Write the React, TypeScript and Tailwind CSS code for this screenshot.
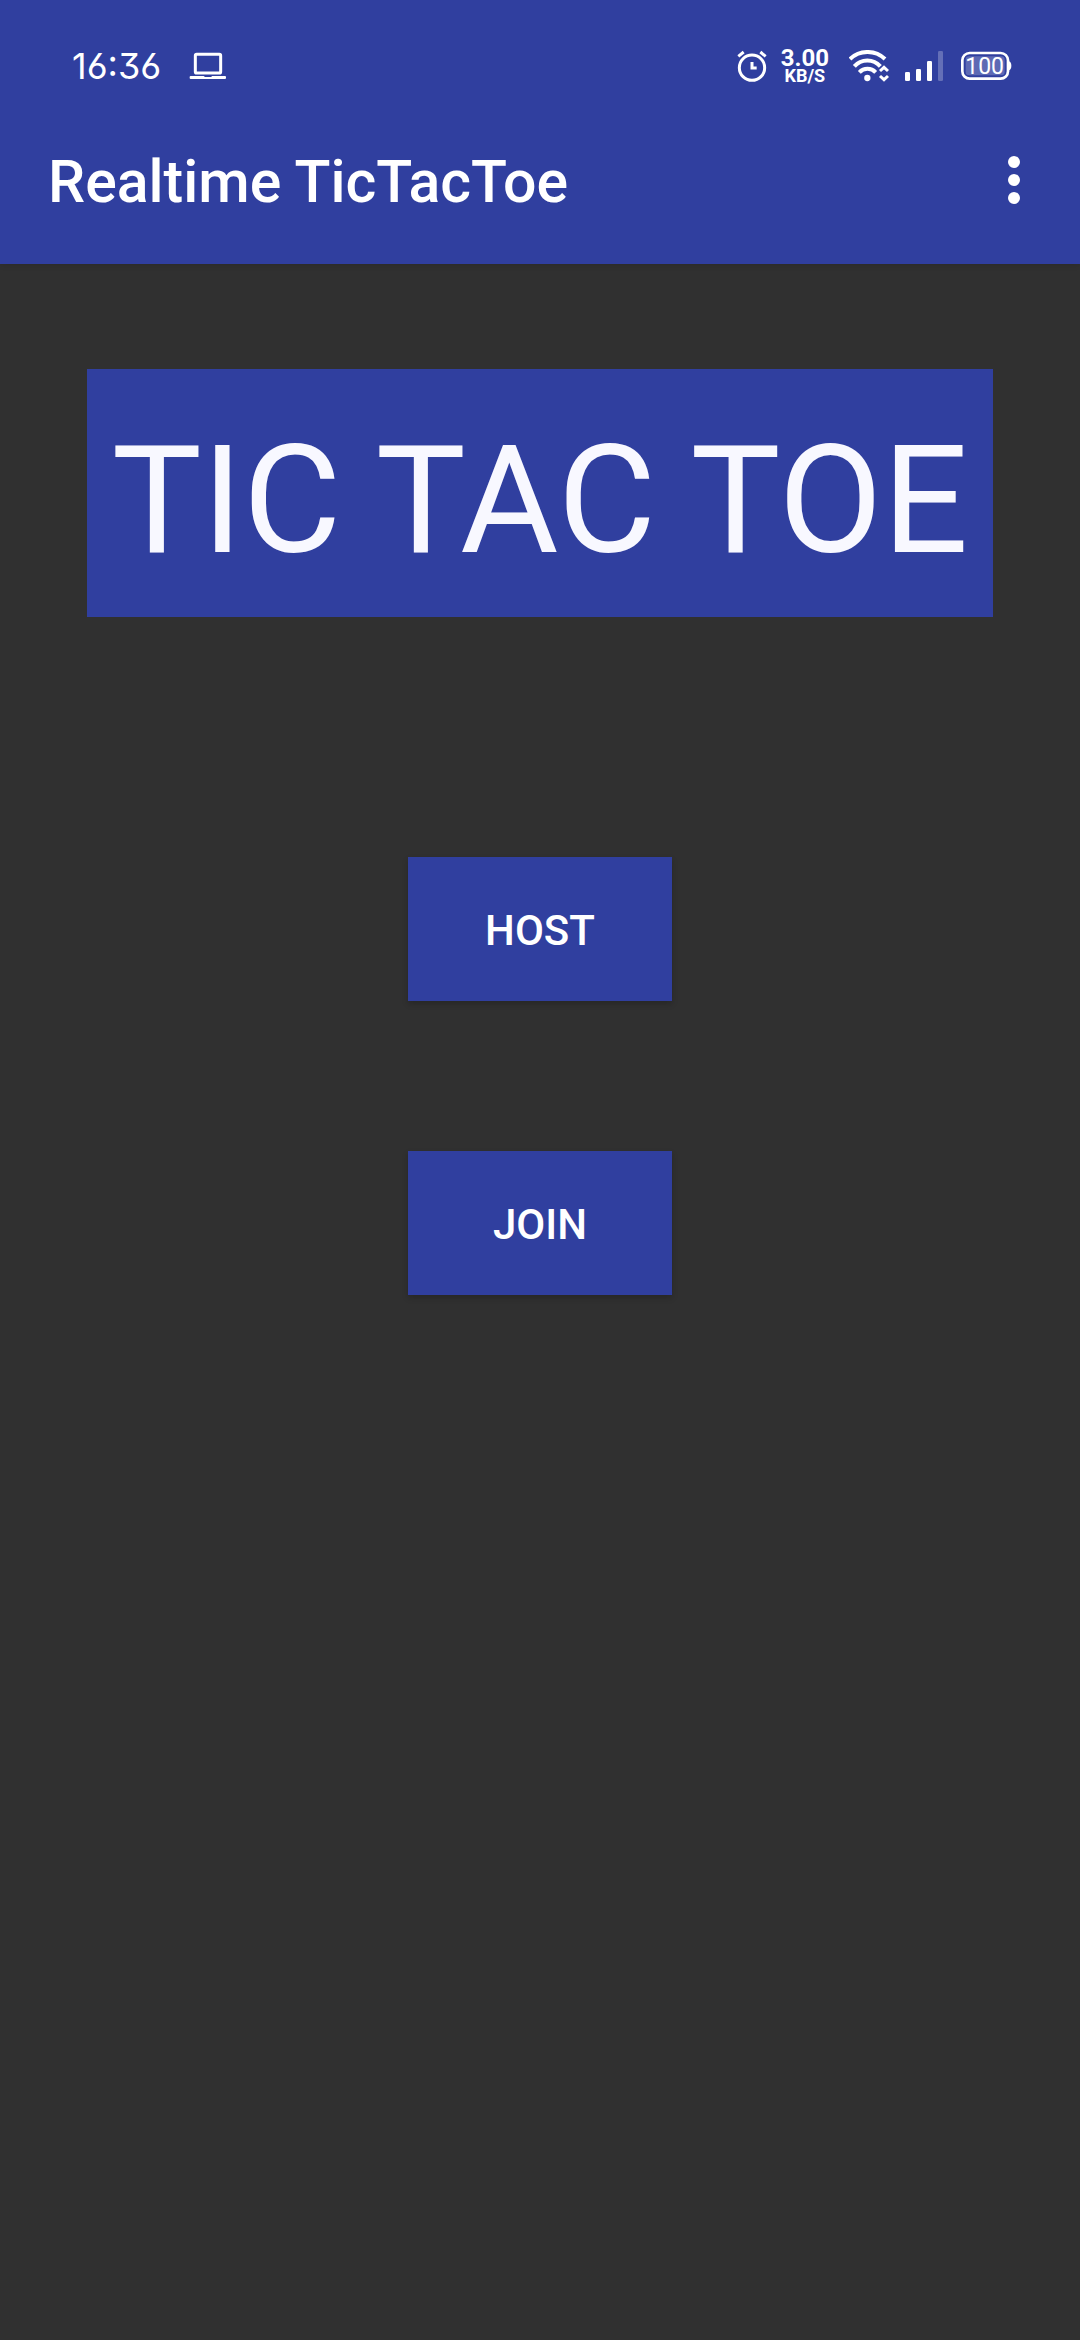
import React from "react";

function LaptopIcon() {
  return (
    <svg width="38" height="28" viewBox="414 66 114 84" aria-hidden="true">
      <rect x="433" y="73" width="76" height="56" rx="4" fill="none" stroke="#fff" strokeWidth="9" />
      <path d="M419 138H458L462 141H480L484 138H522Q525 138 525 141V144Q525 147 522 147H419Q416 147 416 144V141Q416 138 419 138Z" fill="#fff" />
    </svg>
  );
}

function AlarmIcon() {
  return (
    <svg width="30" height="32" viewBox="45 61 90 96" fill="none" stroke="#fff" strokeWidth="9" aria-hidden="true">
      <circle cx="90" cy="114" r="38" />
      <path d="M90 97V115H104M49 80L65 67M115 67L131 80" />
    </svg>
  );
}

function WifiIcon() {
  return (
    <svg width="40" height="32" viewBox="26 60 120 96" fill="none" stroke="#fff" aria-hidden="true">
      <path d="M29 87A76 76 0 0 1 134 87" strokeWidth="12" />
      <path d="M42 109A52 52 0 0 1 120 109" strokeWidth="12" />
      <path d="M57 127A34 34 0 0 1 106 127" strokeWidth="12" />
      <circle cx="81" cy="144" r="9.5" fill="#fff" stroke="none" />
      <path d="M119 123L131 112L143 123M119 138L131 149L143 138" strokeWidth="9" />
    </svg>
  );
}

function SignalIcon() {
  return (
    <svg width="38" height="32" viewBox="192 60 114 96" fill="#fff" aria-hidden="true">
      <rect x="192" y="126" width="15" height="27" rx="4" />
      <rect x="225" y="117" width="15" height="36" rx="4" />
      <rect x="258" y="93" width="15" height="60" rx="4" />
      <rect x="291" y="63" width="15" height="90" rx="4" opacity="0.25" />
    </svg>
  );
}

function BatteryIcon() {
  return (
    <svg width="51" height="30" viewBox="363 64 153 90" aria-hidden="true">
      <rect x="367" y="70" width="137" height="77" rx="22" fill="none" stroke="#fff" strokeWidth="8" />
      <rect x="377" y="80" width="117" height="57" rx="10" fill="#fff" opacity="0.22" />
      <path d="M507 95Q514 97 514 108.500Q514 120 507 122Z" fill="#fff" />
      <text x="434" y="134" textAnchor="middle" fontSize="69" fill="#fff" className="font-['Roboto',sans-serif] font-normal">
        100
      </text>
    </svg>
  );
}

function StatusBar() {
  return (
    <div className="flex h-24 items-center justify-between pt-9 pr-[68px] pl-[72px]">
      <div className="flex items-center gap-7">
        <span className="font-['Inter',sans-serif] text-4xl leading-8 font-normal [font-feature-settings:'cv03','cv09']">16:36</span>
        <LaptopIcon />
      </div>
      <div className="flex items-center">
        <AlarmIcon />
        <div className="ml-3.5 text-center font-bold">
          <div className="text-2xl leading-5">3.00</div>
          <div className="text-lg leading-4">KB/S</div>
        </div>
        <div className="ml-5 flex items-center gap-4">
          <WifiIcon />
          <SignalIcon />
        </div>
        <div className="ml-[18px]">
          <BatteryIcon />
        </div>
      </div>
    </div>
  );
}

function AppBar() {
  return (
    <div className="flex h-42 items-center justify-between pr-9 pl-12">
      <h1 className="pt-1 text-[59px] leading-[72px] font-medium">Realtime TicTacToe</h1>
      <button type="button" aria-label="More options" className="flex h-24 w-[60px] flex-col items-center justify-center gap-1.5">
        <span className="size-3 rounded-full bg-white" />
        <span className="size-3 rounded-full bg-white" />
        <span className="size-3 rounded-full bg-white" />
      </button>
    </div>
  );
}

function ActionButton({ label }: { label: string }) {
  return (
    <button type="button" className="h-36 w-66 bg-[#303f9f] pt-0.5 text-[42px] font-medium shadow-[0_3px_6px_rgba(0,0,0,0.2)]">
      {label}
    </button>
  );
}

export default function App() {
  return (
    <div className="min-h-screen bg-[#303030] font-['Roboto',sans-serif] text-white">
      <header className="bg-[#303f9f] shadow-[0_1px_6px_rgba(0,0,0,0.12)]">
        <StatusBar />
        <AppBar />
      </header>
      <main className="flex flex-col items-center pt-[105px]">
        <h2 className="bg-[#303f9f] px-[25px] pt-11 pb-7 text-center text-[151px] leading-[176px] whitespace-nowrap text-[#f8f8ff]">TIC TAC TOE</h2>
        <div className="mt-60 flex flex-col gap-[150px]">
          <ActionButton label="HOST" />
          <ActionButton label="JOIN" />
        </div>
      </main>
    </div>
  );
}
